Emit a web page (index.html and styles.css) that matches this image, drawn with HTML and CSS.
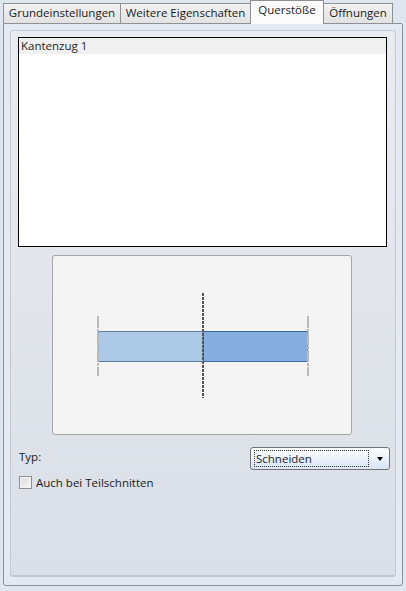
FILE: index.html
```html
<!DOCTYPE html>
<html lang="de">
<head>
<meta charset="utf-8">
<title>Querstöße</title>
<link rel="stylesheet" href="styles.css">
</head>
<body>
<div class="window">
  <div class="tabstrip">
    <div class="tab t1">Grundeinstellungen</div>
    <div class="tab t2">Weitere Eigenschaften</div>
    <div class="tab t3 active">Querstöße</div>
    <div class="tab t4">Öffnungen</div>
  </div>
  <div class="panel">
    <div class="inner">
      <div class="list">
        <div class="item">Kantenzug 1</div>
      </div>
      <div class="preview">
        <svg width="298" height="178" viewBox="0 0 298 178">
          <rect x="45.5" y="75.5" width="105" height="30" fill="#abc9e6" stroke="#607f9f"/>
          <rect x="150.5" y="75.5" width="104" height="30" fill="#86aee1" stroke="#3c69a6"/>
          <line x1="150" y1="37" x2="150" y2="142" stroke="#555555" stroke-width="2" stroke-dasharray="3 1"/>
          <line x1="45" y1="60" x2="45" y2="120" stroke="#b9b9b9" stroke-width="2" stroke-dasharray="12 1 3 1"/>
          <line x1="255" y1="60" x2="255" y2="120" stroke="#b9b9b9" stroke-width="2" stroke-dasharray="12 1 3 1"/>
        </svg>
      </div>
      <div class="typrow">
        <span class="label">Typ:</span>
        <div class="combo">
          <span class="combotext">Schneiden</span>
          <span class="arrow"></span>
        </div>
      </div>
      <label class="check">
        <span class="box"></span>
        <span>Auch bei Teilschnitten</span>
      </label>
    </div>
  </div>
</div>
</body>
</html>
```
FILE: styles.css
```css
html, body {
  margin: 0;
  padding: 0;
}
body {
  background: #dfe6f0;
  font-family: "Open Sans", "Noto Sans", sans-serif;
  font-size: 11.5px;
  color: #1a1a1a;
  width: 406px;
  height: 591px;
  overflow: hidden;
}
.window {
  padding: 0 0 0 3px;
}
.tabstrip {
  display: flex;
  align-items: flex-end;
  height: 23px;
  position: relative;
  z-index: 2;
}
.tab {
  box-sizing: border-box;
  height: 20px;
  border: 1px solid #8e9094;
  border-bottom: none;
  border-left: none;
  background: linear-gradient(#f2f2f2, #e2e2e2);
  display: flex;
  align-items: center;
  justify-content: center;
  line-height: 1;
  padding-bottom: 1px;
  white-space: nowrap;
}
.t1 { width: 118px; border-left: 1px solid #8e9094; }
.t2 { width: 130px; }
.t3 { width: 72px; }
.t4 { width: 69px; }
.tab.active {
  height: 24px;
  margin-bottom: -1px;
  background: #fbfbfc;
  border-color: #8e9094;
  border-left: 1px solid #8e9094;
  margin-left: -1px;
  width: 74px;
  padding-bottom: 5px;
}
.panel {
  box-sizing: border-box;
  width: 400px;
  height: 563px;
  border: 1px solid #8d9095;
  border-radius: 0 2px 3px 3px;
  background: #e4e9f2;
  padding: 6px 6px 8px 6px;
  position: relative;
  z-index: 1;
}
.inner {
  box-sizing: border-box;
  height: 100%;
  border: 1px solid #c6cbd3;
  border-bottom: 2px solid #c2c6ce;
  border-radius: 3px;
  background: linear-gradient(#e9ecf1, #dadee6);
  padding: 6px 5px 0 7px;
  display: flex;
  flex-direction: column;
}
.list {
  box-sizing: border-box;
  height: 210px;
  margin-right: 3px;
  border: 1px solid #000000;
  background: #ffffff;
}
.item {
  height: 16px;
  line-height: 16px;
  background: #f0f0f0;
  padding-left: 2px;
  color: #1e1e1e;
}
.preview {
  align-self: center;
  box-sizing: border-box;
  width: 300px;
  height: 180px;
  margin: 8px 5px 0 0;
  border: 1px solid #a5a5a5;
  border-radius: 3px;
  background: #f4f4f4;
}
.preview svg {
  display: block;
}
.typrow {
  display: flex;
  justify-content: space-between;
  align-items: flex-start;
  margin-top: 12px;
  padding-left: 1px;
}
.label {
  margin-top: 2px;
}
.combo {
  box-sizing: border-box;
  width: 140px;
  height: 23px;
  border: 1px solid #70757c;
  border-radius: 3px;
  background: linear-gradient(#fdfdfe 0%, #eef3fa 45%, #d7e5f6 100%);
  display: flex;
  align-items: center;
  padding: 2px 0 2px 3px;
}
.combotext {
  box-sizing: border-box;
  width: 115px;
  height: 17px;
  border: 1px dotted #333333;
  padding-left: 1px;
  line-height: 15px;
  color: #1c1c34;
}
.arrow {
  margin-left: 8px;
  width: 0;
  height: 0;
  border-left: 3.5px solid transparent;
  border-right: 3.5px solid transparent;
  border-top: 4px solid #000000;
}
.check {
  display: flex;
  align-items: center;
  gap: 4px;
  margin-top: 5px;
  padding-left: 1px;
}
.box {
  box-sizing: border-box;
  width: 13px;
  height: 13px;
  border: 1px solid #8e8f8f;
  background: linear-gradient(135deg, #dcdcdc, #f6f6f6);
  box-shadow: inset 0 0 0 1px #f4f4f4;
}
```
